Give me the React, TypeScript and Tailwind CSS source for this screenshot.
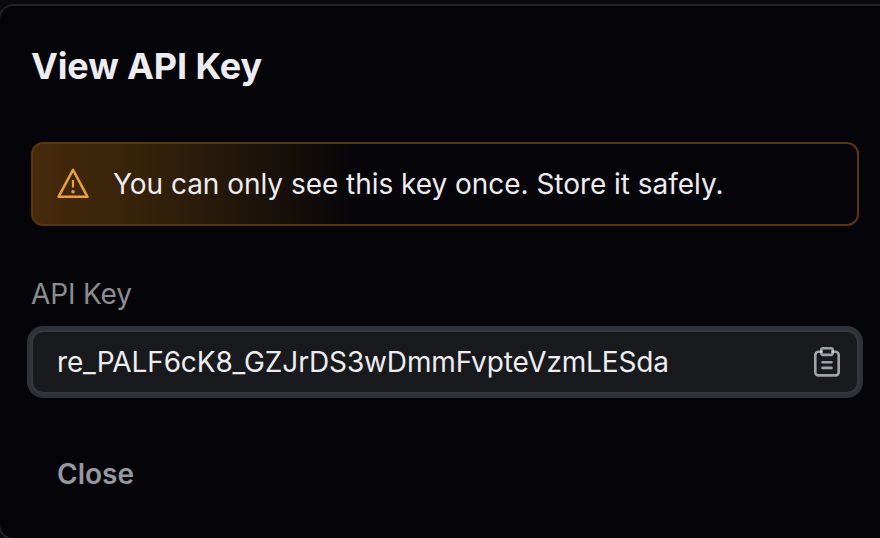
function WarningIcon() {
  return (
    <svg width="32" height="32" viewBox="0 0 32 32" fill="none" className="shrink-0 text-[#e9a23b]">
      <path d="M16 1.900 L30.500 28.800 H1.500 Z" stroke="currentColor" strokeWidth="2.500" strokeLinejoin="round" />
      <path d="M16 12v7.500" stroke="currentColor" strokeWidth="2.300" />
      <circle cx="16" cy="23.800" r="1.700" fill="currentColor" />
    </svg>
  );
}

function ClipboardIcon() {
  return (
    <svg width="28" height="32" viewBox="0 0 28 32" fill="none" stroke="currentColor" strokeWidth="2.600" strokeLinecap="round" strokeLinejoin="round">
      <path d="M7.500 5.700H5.500a3.200 3.200 0 0 0-3.200 3.200v17.300a3.200 3.200 0 0 0 3.200 3.200h17a3.200 3.200 0 0 0 3.200-3.200V8.900a3.200 3.200 0 0 0-3.200-3.200H20.500" />
      <rect x="8.300" y="2.300" width="11.400" height="6.600" rx="1.800" />
      <path d="M9.500 16.300h9M9.500 21.900h9" />
      <path d="M8.300 5.700v.1M19.700 5.700v.1" className="stroke-[#d3d6d8]" />
    </svg>
  );
}

export default function App() {
  return (
    <div className="h-[538px] w-[880px] overflow-hidden bg-[#0a090b] pt-1 font-['Inter',sans-serif] antialiased">
      <section className="-ml-0.5 h-[536px] w-[900px] rounded-2xl border-2 border-[#212329] bg-[#050409] pt-9 pl-[31px]">
        <div className="flex w-[828px] flex-col items-start">
          <h1 className="h-12 whitespace-nowrap text-[36px] leading-[48px] font-bold tracking-[-0.13px] text-[#ededef]">View API Key</h1>

          <div className="mt-[52px] flex h-[84px] w-full items-center rounded-xl border-2 border-[#57370f] bg-[linear-gradient(90deg,#462a0b_0%,#35210a_14%,#1d140a_27%,#050409_40%)] pl-6">
            <WarningIcon />
            <p className="ml-6 whitespace-nowrap text-[28px] leading-10 tracking-[-0.035px] text-[#ededef]">You can only see this key once. Store it safely.</p>
          </div>

          <label className="mt-12 h-10 text-[28px] leading-10 tracking-[-0.14px] text-[#8b8d91]">API Key</label>
          <div className="mt-4 flex h-16 w-full items-center justify-between rounded-xl border-2 border-[#35383d] bg-[#191a1e] pr-[16px] pl-6 ring-4 ring-[#2e3138]">
            <span className="whitespace-nowrap text-[28px] leading-10 tracking-[-0.14px] text-[#ededef]">re_PALF6cK8_GZJrDS3wDmmFvpteVzmLESda</span>
            <button aria-label="Copy API key" className="text-[#a0a4a8]"><ClipboardIcon /></button>
          </div>

          <button className="mt-[60px] ml-[26px] h-10 text-[28px] leading-10 font-semibold text-[#96989d]">Close</button>
        </div>
      </section>
    </div>
  );
}
